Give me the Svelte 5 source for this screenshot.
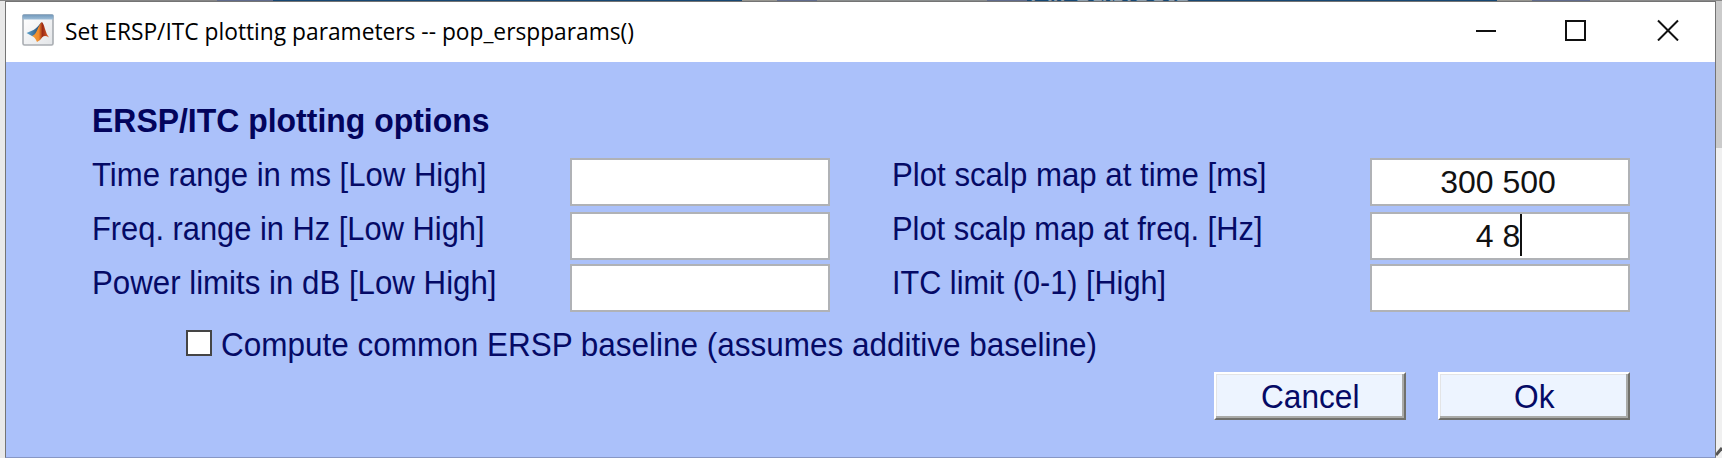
<script>
  const left = [
    { text: 'Time range in ms [Low High]', w: 394.5 },
    { text: 'Freq. range in Hz [Low High]', w: 392.5 },
    { text: 'Power limits in dB [Low High]', w: 404.5 },
  ];
  const right = [
    { text: 'Plot scalp map at time [ms]', w: 374.5 },
    { text: 'Plot scalp map at freq. [Hz]', w: 370.5 },
    { text: 'ITC limit (0-1) [High]', w: 274 },
  ];
  const leftValues = ['', '', ''];
  const rightValues = ['300 500', '4 8', ''];

  // Condenses a line of text horizontally to the given width.
  function fit(node, width) {
    const natural = node.getBoundingClientRect().width;
    node.style.transform = `scaleX(${width / natural})`;
    node.style.marginRight = `${width - natural}px`;
  }
</script>

<div class="desktop">
  <div class="backdrop">
    <i class="g"></i><i class="p"></i><i class="n"></i><i class="g2"></i><i class="p2"></i><i class="g3"></i><i class="p2"></i><i class="n2"><span>All subjects</span></i><i class="g2"></i><i class="p3"></i><i class="g4"></i>
  </div>
  <main class="window">
    <header>
      <svg class="logo" width="32" height="32" viewBox="0 0 32 32">
        <defs>
          <linearGradient id="bar" x1="0" y1="0" x2="0" y2="1"><stop offset="0" stop-color="#6f96b9" /><stop offset="1" stop-color="#9fbfd9" /></linearGradient>
          <linearGradient id="face" x1="0" y1="0" x2="1" y2="1"><stop offset="0" stop-color="#fff" /><stop offset="1" stop-color="#e3e5e8" /></linearGradient>
          <linearGradient id="flame" x1="0" y1="0" x2="1" y2="0"><stop offset="0" stop-color="#f2a03a" /><stop offset=".4" stop-color="#f08a2c" /><stop offset=".62" stop-color="#9c2a16" /><stop offset="1" stop-color="#e0652a" /></linearGradient>
          <linearGradient id="wing" x1="0" y1="0" x2="1" y2="0"><stop offset="0" stop-color="#5fa5cf" /><stop offset="1" stop-color="#24466f" /></linearGradient>
        </defs>
        <rect x="1" y="1" width="30" height="30" rx="1.5" fill="url(#face)" stroke="#a9adb2" stroke-width="1.6" />
        <rect x="0.5" y="0.5" width="31" height="5" rx="1" fill="url(#bar)" />
        <path d="M4.5 19 L11.5 16 Q15 14 19 8.5 L18 15 L13 22.5 L10 22 Z" fill="url(#wing)" />
        <path d="M10 22 Q13 21 15 16.500 Q18 9 19.800 8 Q21.500 9 23 15 Q24.500 20.500 27 23.500 Q23 21 20.500 23 Q18 27 15 28 Q13 23 10 22 Z" fill="url(#flame)" />
      </svg>
      <h1><span use:fit={569}>Set ERSP/ITC plotting parameters -- pop_erspparams()</span></h1>
      <svg class="controls" width="204" height="22" viewBox="0 0 204 22" fill="none" stroke="#111" stroke-width="2">
        <path d="M1 12H21" />
        <rect x="91" y="2" width="19" height="19" />
        <path d="M183 1.500L203 21.500M203 1.500L183 21.500" />
      </svg>
    </header>

    <section class="content">
      <h2><span use:fit={397.5}>ERSP/ITC plotting options</span></h2>
      <div class="columns">
        <div class="labels">
          {#each left as l}<label><span use:fit={l.w}>{l.text}</span></label>{/each}
        </div>
        <div class="fields">
          {#each leftValues as v}<div class="field">{v}</div>{/each}
        </div>
        <div class="labels second">
          {#each right as l}<label><span use:fit={l.w}>{l.text}</span></label>{/each}
        </div>
        <div class="fields">
          {#each rightValues as v, i}
            <div class="field">
              <span class="value">{v}{#if i === 1}<b class="caret"></b>{/if}</span>
            </div>
          {/each}
        </div>
      </div>
      <div class="check">
        <div class="box"></div>
        <label><span use:fit={876}>Compute common ERSP baseline (assumes additive baseline)</span></label>
      </div>
      <div class="actions">
        <button><span use:fit={98.5}>Cancel</span></button>
        <button><span use:fit={40.5}>Ok</span></button>
      </div>
    </section>
  </main>
  <aside><svg width="6" height="14" viewBox="0 0 6 14"><path d="M0 11L6 4" stroke="#555" stroke-width="3" /></svg></aside>
</div>

<style>
  :global(body) { margin: 0; overflow: hidden; }
  .desktop {
    box-sizing: border-box; width: 1722px; height: 458px; overflow: hidden;
    display: grid; grid-template-columns: 5px 1711px 6px; grid-template-rows: 1px 457px;
    background: #e9e9e9; font-family: "Liberation Sans", Arial, sans-serif;
  }
  .backdrop { grid-column: 1 / 4; display: flex; height: 1px; overflow: hidden; background: #8b8b8b; }
  .backdrop i { height: 2px; flex: none; font-style: normal; }
  .g { width: 217px; background: #858585; }
  .p { width: 56px; background: #606b8c; }
  .n { width: 469px; background: #174873; }
  .g2 { width: 35px; background: #96958f; }
  .p2 { width: 40px; background: #606b8c; }
  .g3 { width: 170px; background: #898c8c; }
  .n2 { width: 470px; background: #174873; }
  .n2 span { display: block; margin: -24px 0 0 4px; font-size: 31.500px; line-height: 30px; color: #8fa0ae; }
  .p3 { width: 58px; background: #606b8c; }
  .g4 { width: 131px; background: #898989; }
  .window {
    grid-column: 2; box-sizing: border-box; height: 457px; border: 1px solid #747474;
    border-bottom-color: #8797c5; background: #abc1fa; display: flex; flex-direction: column;
  }
  header { height: 60px; flex: none; background: #fff; display: flex; align-items: flex-start; }
  .logo { margin: 12px 0 0 16px; flex: none; }
  h1 {
    margin: 11px 0 0 10.500px; font: 400 24px/35px "Open Sans", "Noto Sans", sans-serif;
    color: #000; white-space: nowrap;
  }
  h1 span, h2 span, label span, button span { display: inline-block; transform-origin: 0 50%; white-space: pre; }
  .controls { margin: 17px 36px 0 auto; flex: none; }
  .content { padding: 32px 0 0 86px; color: #050a66; font-size: 33px; line-height: 54px; }
  h2 { margin: 0; height: 54px; font-size: 33px; font-weight: 700; color: #03045c; }
  .columns { display: flex; height: 170px; }
  .labels { width: 478px; display: flex; flex-direction: column; }
  .labels.second { margin-left: 62px; }
  label { display: block; height: 54px; white-space: nowrap; }
  .fields { width: 260px; padding-top: 10px; display: flex; flex-direction: column; flex: none; }
  .field {
    box-sizing: border-box; width: 260px; height: 48px; border: 2px solid #b0b2b6; background: #fff;
    color: #111; font-size: 32px; line-height: 45px; display: flex; justify-content: center;
    margin-bottom: 6px;
  }
  .field:nth-child(2) { margin-bottom: 4px; }
  .value { display: flex; white-space: pre; padding-right: 4px; }
  .caret { width: 2px; height: 42px; margin-right: -2px; background: #111; }
  .check { display: flex; height: 54px; padding-left: 94px; }
  .box { box-sizing: border-box; width: 26px; height: 26px; margin: 12px 8.500px 0 0; border: 2px solid #454545; background: #fff; }
  .actions { display: flex; justify-content: flex-end; gap: 32px; padding-right: 85px; }
  button {
    box-sizing: border-box; width: 192px; height: 48px; margin: 0; padding: 1px 0 0 1px;
    border: 2px solid; border-color: #fff #70706c #70706c #fff; background: #edf4ff;
    box-shadow: inset -2px -2px #a9aaa8, inset 1px 1px #e3e4e6;
    font: 33px/44px "Liberation Sans", Arial, sans-serif; color: #050a66;
    display: flex; justify-content: center;
  }
  aside {
    grid-column: 3; height: 457px; display: flex; align-items: flex-end;
    background: linear-gradient(#cbcbcb 0 147px, #f0f0f0 147px);
  }
</style>
